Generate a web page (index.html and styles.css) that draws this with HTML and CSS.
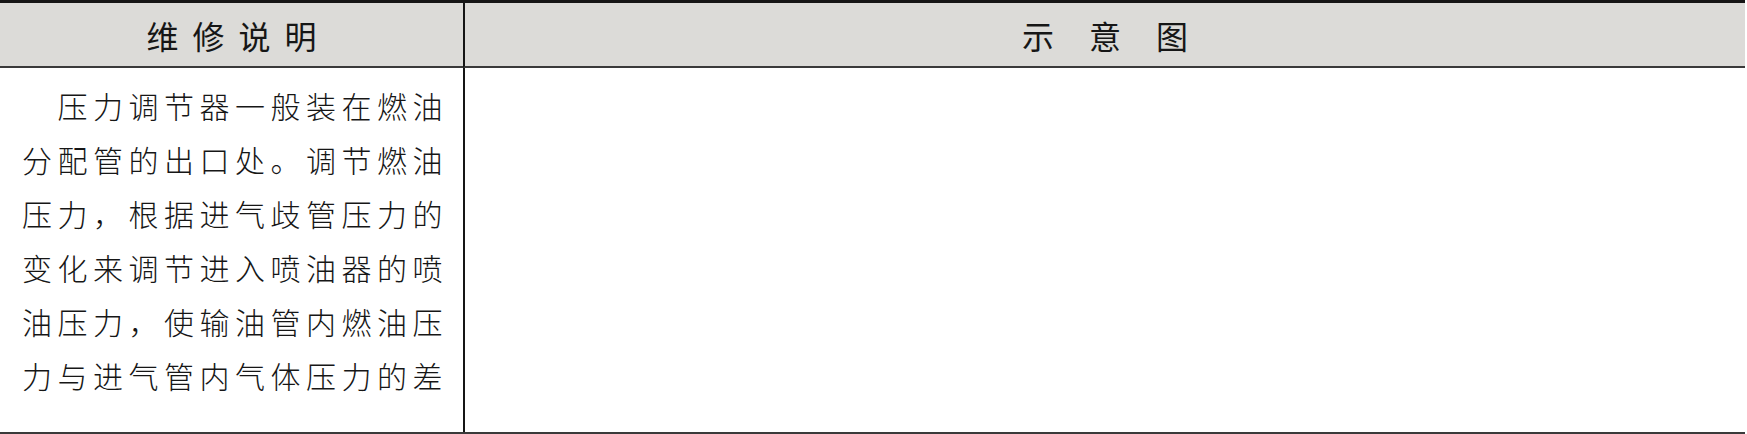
FILE: index.html
```html
<!DOCTYPE html>
<html lang="zh-CN">
<head>
  <meta charset="UTF-8">
  <title>维修说明</title>
  <link rel="stylesheet" href="styles.css">
</head>
<body>
  <div class="sheet">
    <div class="sheet-head">
      <span class="head-text head-text--left">维修说明</span>
    </div>
    <div class="sheet-head sheet-col-right">
      <span class="head-text head-text--right">示意图</span>
    </div>

    <div class="sheet-cell">
      <p class="repair-note">压力调节器一般装在燃油分配管的出口处。调节燃油压力，根据进气歧管压力的变化来调节进入喷油器的喷油压力，使输油管内燃油压力与进气管内气体压力的差</p>
    </div>
    <div class="sheet-cell sheet-col-right"></div>
  </div>
</body>
</html>
```

FILE: styles.css
```css
:root {
  --ink: #161616;
  --rule-dark: #151515;
  --rule-mid: #3a3a3a;
  --head-bg: #dcdbd8;
  --cjk: "Noto Sans CJK SC", "Noto Sans CJK TC", sans-serif;
}

body {
  margin: 0;
  background: #ffffff;
  font-family: var(--cjk);
  color: var(--ink);
}

.sheet {
  width: 1745px;
  display: grid;
  grid-template-columns: 463px 1fr;
  grid-template-rows: 65px 364px;
  border-top: 3px solid var(--rule-dark);
  border-bottom: 2px solid var(--rule-mid);
}

.sheet-head {
  box-sizing: border-box;
  display: flex;
  justify-content: center;
  align-items: center;
  background-color: var(--head-bg);
  border-bottom: 2px solid var(--rule-mid);
}

.sheet-col-right {
  border-left: 2px solid var(--rule-dark);
}

.head-text {
  display: inline-block;
  font-size: 32px;
  line-height: 1;
  font-weight: 400;
}

.head-text--left {
  letter-spacing: 14px;
  margin-right: -14px;
}

.head-text--right {
  letter-spacing: 35px;
  margin-right: -35px;
}

.sheet-cell {
  box-sizing: border-box;
  padding: 10px 10px 0 22px;
}

.repair-note {
  margin: 0;
  font-size: 30px;
  font-weight: 300;
  line-height: 54px;
  letter-spacing: 5.5px;
  text-indent: 35.5px;
}
```
